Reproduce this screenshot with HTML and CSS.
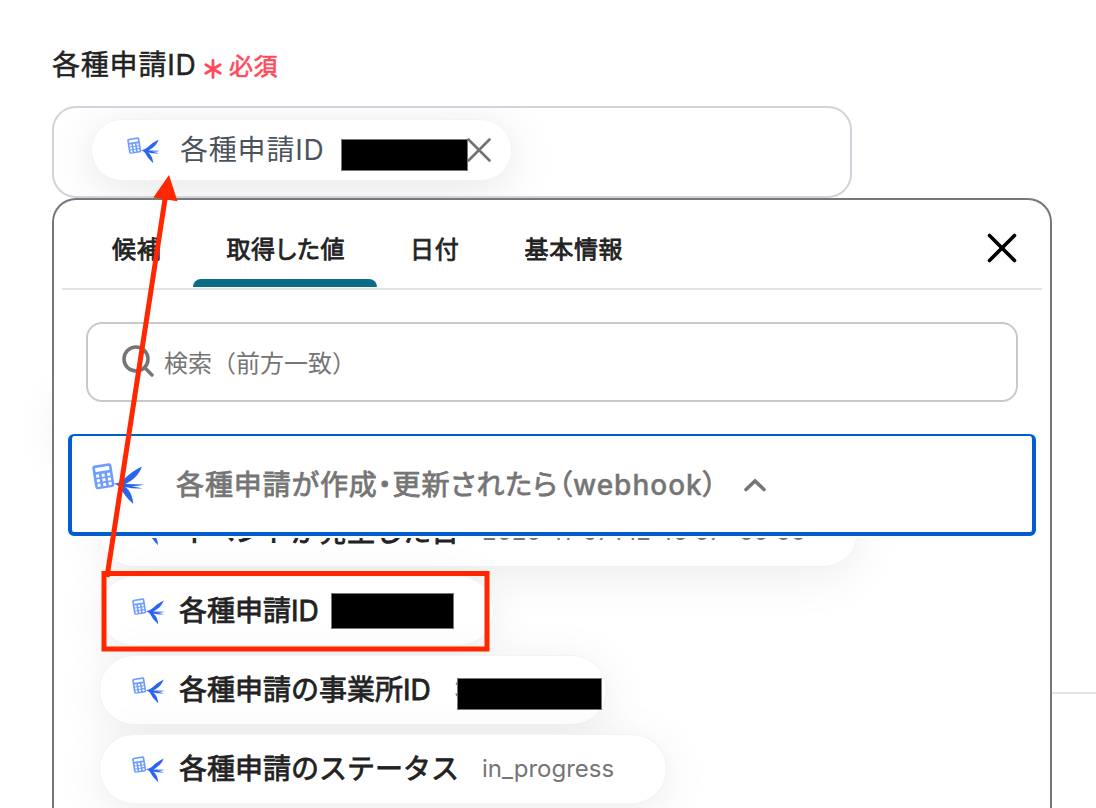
FILE: index.html
```
<!DOCTYPE html>
<html lang="ja">

<head>
    <meta charset="UTF-8">
    <meta name="viewport" content="width=device-width, initial-scale=1.0">
    <title>各種申請ID</title>
    <link rel="stylesheet" href="styles.css">
</head>

<body>
    <!-- アプリアイコン -->
    <svg class="defs" width="0" height="0">
        <symbol id="app-icon" viewBox="0 0 52 42">
            <g transform="rotate(-9 11 13)">
                <rect x="1.600" y="1.300" width="19.400" height="24" rx="2.6" fill="#6f9dff" />
                <rect x="4.200" y="3.900" width="14.200" height="4" rx="0.8" fill="#fff" />
                <path d="M4.200 10.700h3v3h-3zM9.800 10.700h3v3h-3zM15.400 10.700h3v3h-3zM4.200 15.400h3v3h-3zM9.800 15.400h3v3h-3zM15.400 15.400h3v3h-3zM4.200 20.100h3v3h-3zM9.800 20.100h3v3h-3zM15.400 20.100h3v3h-3z" fill="#fff" />
            </g>
            <path d="M22 20.500Q27 20.300 31 17Q40 8 50 3.500Q46.500 13.500 37 19L33.500 21L51.800 21.500Q46 23.500 38.500 22.700L50.500 25.500Q41 26 33.500 24Q40.500 29.500 41.200 41Q32 32.500 28 24Q25 21.500 22 20.500Z" fill="#2864f0" />
        </symbol>
    </svg>

    <div class="page">
        <div class="field-label">
            <span class="label-text">各種申請ID</span>
            <svg class="asterisk" viewBox="0 0 18 20">
                <path d="M9 1.500v17M1.800 5.700l14.400 8.600M16.200 5.700L1.800 14.300" />
            </svg>
            <span class="required">必須</span>
        </div>

        <!-- 入力欄 -->
        <div class="field">
            <div class="token">
                <svg class="icon-small"><use href="#app-icon" /></svg>
                <span class="token-text">各種申請ID</span>
                <span class="mask"></span>
                <svg class="token-close" viewBox="0 0 24 24">
                    <path d="M1.500 1.500l21 21M22.500 1.500l-21 21" />
                </svg>
            </div>
        </div>

        <!-- 候補パネル -->
        <div class="panel">
            <div class="tabs">
                <div class="tab">候補</div>
                <div class="tab active">取得した値</div>
                <div class="tab">日付</div>
                <div class="tab">基本情報</div>
                <svg class="panel-close" viewBox="0 0 30 30">
                    <path d="M2.500 2.500l25 25M27.500 2.500l-25 25" />
                </svg>
            </div>
            <div class="search">
                <svg class="search-icon" viewBox="0 0 34 34">
                    <circle cx="15" cy="15" r="12" />
                    <path d="M23.500 23.500l7.500 7.500" />
                </svg>
                <span class="placeholder">検索（前方一致）</span>
            </div>
            <div class="accordion">
                <svg class="icon-large"><use href="#app-icon" /></svg>
                <span class="accordion-title">各種申請が作成・更新されたら（<span class="latin">webhook</span>）</span>
                <svg class="chevron" viewBox="0 0 24 16">
                    <path d="M3 13.500L12 5l9 8.500" />
                </svg>
            </div>
            <div class="list">
                <div class="item item-event">
                    <svg class="icon-small"><use href="#app-icon" /></svg>
                    <span class="name">イベントが発生した日</span>
                    <span class="value">2025-11-07T12:45:57+09:00</span>
                </div>
                <div class="item item-id">
                    <svg class="icon-small"><use href="#app-icon" /></svg>
                    <span class="name">各種申請ID</span>
                    <span class="mask"></span>
                </div>
                <div class="item item-office">
                    <svg class="icon-small"><use href="#app-icon" /></svg>
                    <span class="name">各種申請の事業所ID</span>
                    <span class="value">3</span>
                    <span class="mask"></span>
                </div>
                <div class="item item-status">
                    <svg class="icon-small"><use href="#app-icon" /></svg>
                    <span class="name">各種申請のステータス</span>
                    <span class="value">in_progress</span>
                </div>
            </div>
        </div>
    </div>

    <div class="back-shadow"></div>
    <div class="back-line"></div>

    <!-- 赤枠と矢印 -->
    <svg class="annotation" viewBox="0 0 1096 808">
        <rect x="104" y="573.500" width="383" height="75.500" />
        <path class="arrow-line" d="M107 577L165.500 196" />
        <path class="arrow-head" d="M169 175L153.300 197.500L177.500 201.300Z" />
    </svg>
</body>

</html>
```
FILE: styles.css
```
* {
    margin: 0;
    padding: 0;
    box-sizing: border-box;
}

body {
    width: 1096px;
    height: 808px;
    overflow: hidden;
    position: relative;
    background-color: #fff;
    color: #222;
    font-family: Inter, "Noto Sans CJK JP", sans-serif;
}

svg {
    display: block;
    flex-shrink: 0;
    fill: none;
    stroke-linecap: round;
}

.defs {
    position: absolute;
}

.page {
    width: 1000px;
    height: 808px;
    margin-left: 52px;
    position: relative;
    z-index: 1;
}

/* 中間の太さ */
.label-text,
.required,
.tab,
.accordion-title,
.name {
    font-weight: 400;
    -webkit-text-stroke: 0.8px currentColor;
}

/* ラベル */
.field-label {
    height: 106px;
    padding-top: 45px;
    display: flex;
    align-items: flex-start;
}

.label-text {
    width: 152px;
    font-size: 28px;
    line-height: 40px;
    letter-spacing: 0.8px;
    -webkit-text-stroke-width: 0.5px;
}

.asterisk {
    width: 18px;
    height: 20px;
    margin-top: 14px;
    stroke: #ff4a5c;
    stroke-width: 2.8;
}

.required {
    margin-left: 7px;
    color: #ff4a5c;
    font-size: 24px;
    line-height: 43px;
    letter-spacing: 0.4px;
    -webkit-text-stroke-width: 0.6px;
}

/* 入力欄 */
.field {
    width: 800px;
    height: 92px;
    padding: 11px 37px;
    border: 2px solid #d0d3dd;
    border-radius: 24px;
    overflow: hidden;
}

.token {
    width: 421px;
    height: 62px;
    padding-left: 35px;
    border: 1px solid #f3f3f3;
    border-radius: 31px;
    background-color: #fff;
    box-shadow: 0 8px 48px rgba(0, 0, 0, 0.1);
    display: flex;
    align-items: center;
}

.icon-small {
    width: 33px;
    height: 27px;
}

.token-text {
    width: 161px;
    margin-left: 20px;
    color: #4b535c;
    font-size: 28px;
    line-height: 40px;
    letter-spacing: 0.8px;
}

.mask {
    height: 32px;
    background-color: #000;
    border: 1px solid #777;
}

.token .mask {
    width: 127px;
    margin-top: 9px;
}

.token-close {
    width: 24px;
    height: 24px;
    margin-left: -1px;
    stroke: #737373;
    stroke-width: 2.6;
}

/* パネル */
.panel {
    height: 610px;
    padding: 0 8px;
    border: 2px solid #777;
    border-bottom: none;
    border-radius: 24px 24px 0 0;
    background-color: #fff;
}

.tabs {
    height: 90px;
    padding-left: 17px;
    border-bottom: 2px solid #e3e3e3;
    display: flex;
}

.tab {
    padding: 30px 32px 0 33px;
    position: relative;
    font-size: 24px;
    line-height: 40px;
    letter-spacing: 0.7px;
    font-feature-settings: "palt";
}

.tab.active::after {
    content: "";
    position: absolute;
    left: 0;
    right: 0;
    bottom: 1px;
    height: 8px;
    background-color: #0a6d85;
    border-radius: 8px 8px 0 0;
}

.panel-close {
    width: 30px;
    height: 30px;
    margin: 33px 25px 0 auto;
    stroke: #000;
    stroke-width: 3.6;
}

.search {
    height: 80px;
    margin: 32px 24px 0;
    padding-left: 33px;
    border: 2px solid #c8c8c8;
    border-radius: 16px;
    display: flex;
    align-items: center;
    gap: 9px;
    color: #757575;
    font-size: 24px;
}

.placeholder {
    margin-bottom: 2px;
}

.search-icon {
    width: 34px;
    height: 34px;
    margin-bottom: 2px;
    stroke: #757575;
    stroke-width: 3.6;
}

.accordion {
    height: 102px;
    margin: 32px 6px 0;
    padding-left: 20px;
    border: 4px solid #005fcc;
    border-top-width: 2px;
    border-radius: 6px;
    display: flex;
    align-items: center;
    color: #757575;
}

.icon-large {
    width: 52px;
    height: 42px;
}

.accordion-title {
    width: 544px;
    margin: 0 0 3px 32px;
    font-size: 28px;
    letter-spacing: 0.9px;
    white-space: nowrap;
    font-feature-settings: "palt";
}

.latin {
    font-weight: 500;
    letter-spacing: 1px;
    -webkit-text-stroke-width: 0.4px;
}

.chevron {
    width: 24px;
    height: 16px;
    margin-left: 23px;
    stroke: #757575;
    stroke-width: 3.6;
}

/* 値の一覧 */
.list {
    height: 270px;
    margin: 2px -8px 0;
    padding-left: 45px;
    overflow: hidden;
}

.item {
    height: 70px;
    margin-bottom: 9px;
    padding-left: 32px;
    border: 1px solid #f3f3f3;
    border-radius: 35px;
    background-color: #fff;
    box-shadow: 0 8px 48px rgba(0, 0, 0, 0.08);
    display: flex;
    align-items: center;
}

.item-event {
    width: 759px;
    margin-top: -41px;
}

.item-id {
    width: 395px;
}

.item-office {
    width: 508px;
}

.item-status {
    width: 568px;
}

.name {
    margin-left: 14px;
    font-size: 28px;
    line-height: 40px;
    white-space: nowrap;
}

.value {
    margin-left: 23px;
    color: #757575;
    font-size: 24px;
    line-height: 40px;
    white-space: nowrap;
}

.item-id .name {
    width: 139px;
}

.item-office .name {
    width: 252px;
}

.item-id .mask {
    width: 123px;
    height: 36px;
    margin-left: 13px;
}

.item-office .mask {
    width: 145px;
    margin: 8px 0 0 -12px;
    position: relative;
}

/* 背景 */
.back-shadow {
    width: 200px;
    height: 60px;
    position: absolute;
    left: 60px;
    top: 390px;
    border-radius: 30px;
    box-shadow: 0 8px 48px rgba(0, 0, 0, 0.1);
}

.back-line {
    width: 44px;
    height: 2px;
    position: absolute;
    left: 1052px;
    top: 692px;
    background-color: #e3e3e3;
}

/* 注釈 */
.annotation {
    width: 1096px;
    height: 808px;
    position: absolute;
    left: 0;
    top: 0;
    z-index: 2;
    stroke: #ff2600;
    stroke-width: 5;
    stroke-linecap: butt;
}

.arrow-head {
    fill: #ff2600;
    stroke: none;
}
```
